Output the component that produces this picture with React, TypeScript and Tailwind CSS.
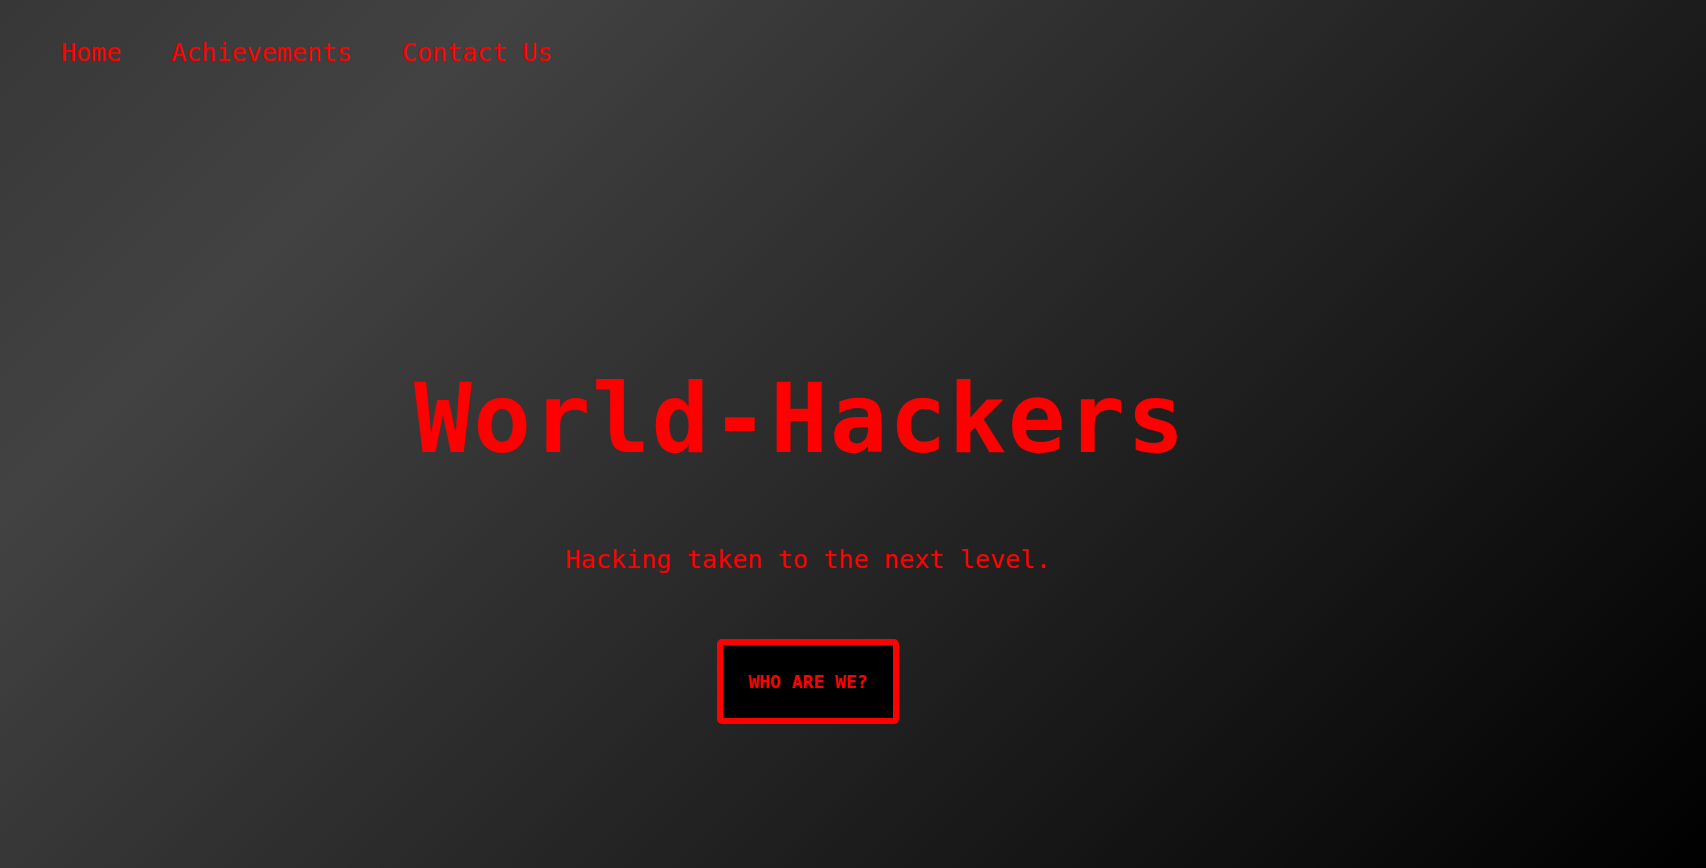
import React from 'react'

function App() {
  return (
    <div className="min-h-screen w-full bg-[linear-gradient(135deg,#373737_0%,#424242_20%,#000000_100%)] font-['DejaVu_Sans_Mono',monospace] text-[#ff0000]">
      {/* Nav */}
      <nav className="flex gap-[50px] pl-[61px] pt-[38px] text-[25px] leading-[29px]">
        <a href="#">Home</a>
        <a href="#">Achievements</a>
        <a href="#">Contact Us</a>
      </nav>

      {/* Hero */}
      <main className="flex flex-col items-center pr-[90px]">
        <h1 className="mt-[296px] mr-[16px] text-[96px] font-bold leading-[112px] tracking-[1.6px]">
          World-Hackers
        </h1>
        <p className="mt-[70px] text-[25.2px] leading-[29px]">
          Hacking taken to the next level.
        </p>
        <button className="mt-[65px] rounded-[5px] border-[6px] border-[#ff0000] bg-black px-[25px] py-[25px] text-[18px] font-bold leading-[23px] text-[#ff0000]">
          WHO ARE WE?
        </button>
      </main>
    </div>
  )
}

export default App
